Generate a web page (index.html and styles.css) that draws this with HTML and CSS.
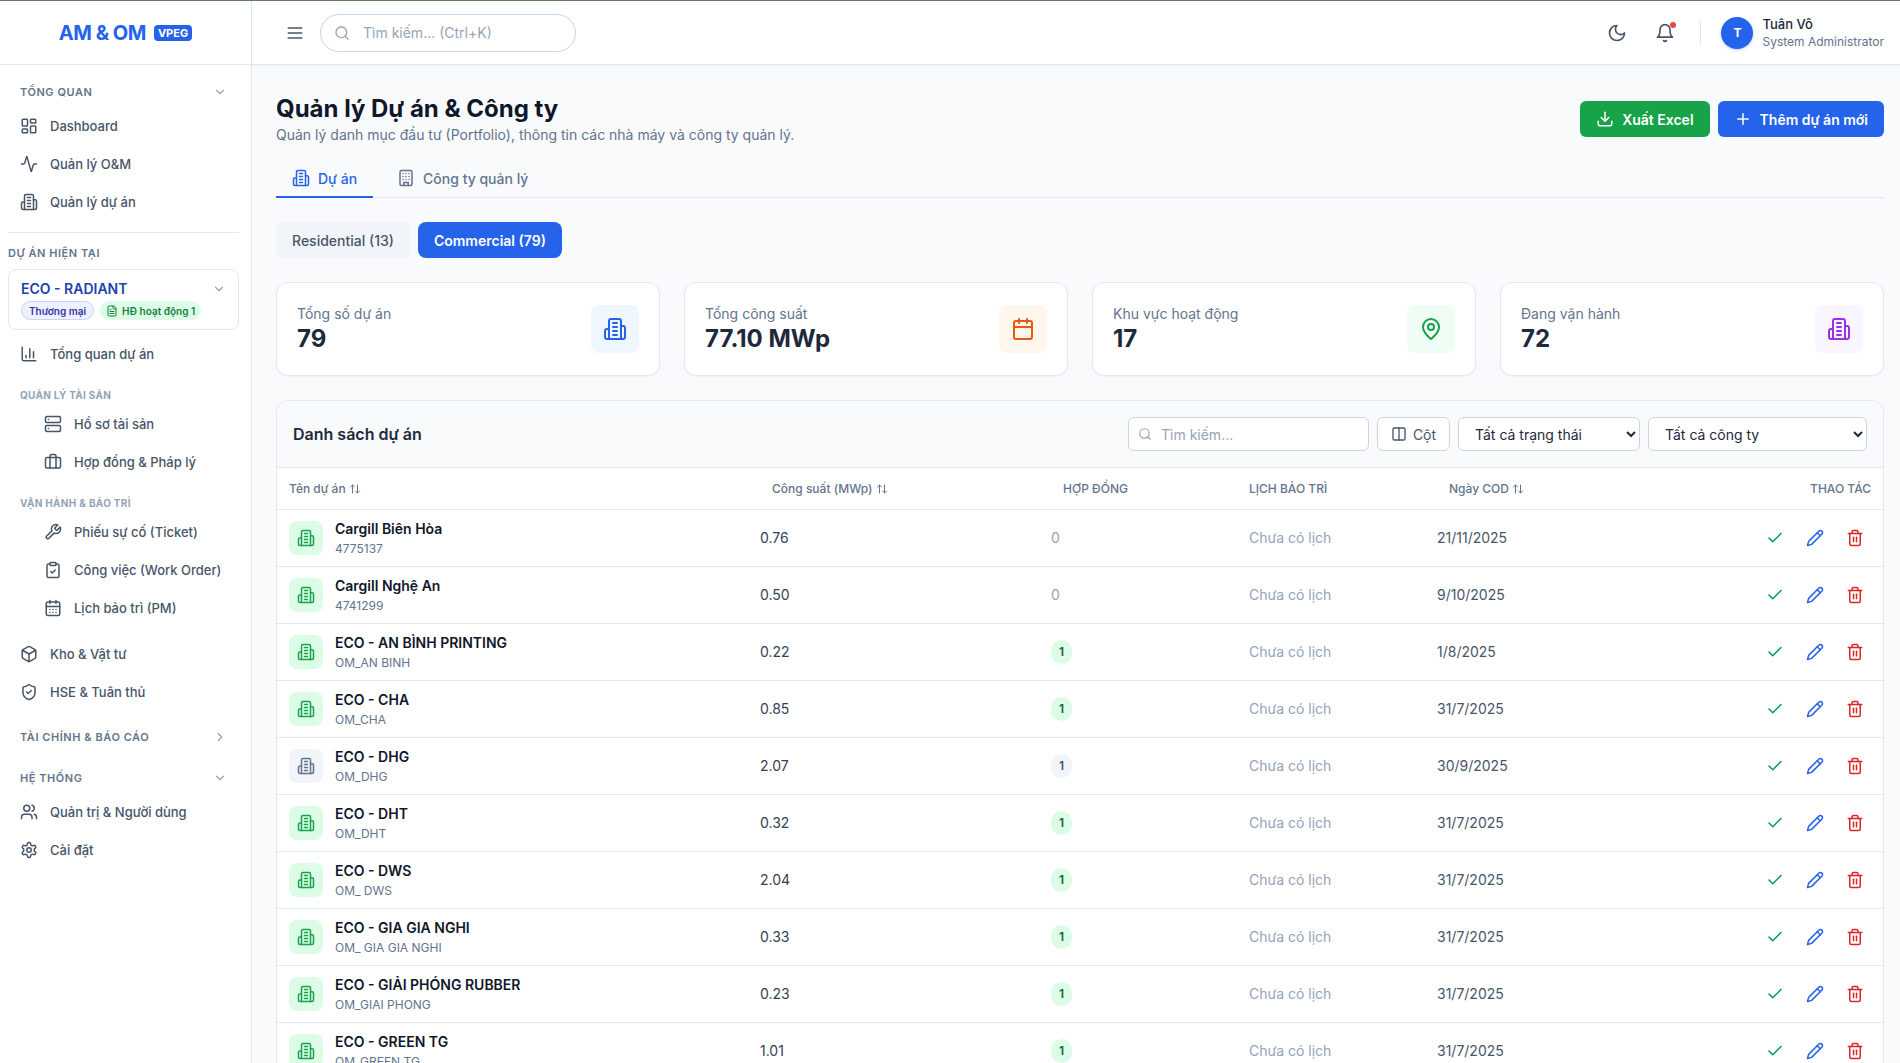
FILE: index.html
```html
<!DOCTYPE html>
<html lang="vi">
<head>
  <meta charset="UTF-8" />
  <meta name="viewport" content="width=device-width, initial-scale=1" />
  <title>Quản lý Dự án & Công ty</title>
  <link rel="stylesheet" href="styles.css">
</head>
<body>

  <!-- icon sprite -->
  <svg class="sprite" xmlns="http://www.w3.org/2000/svg">
    <symbol id="i-dashboard" viewBox="0 0 24 24"><rect x="3" y="3" width="7" height="9" rx="1"/><rect x="14" y="3" width="7" height="5" rx="1"/><rect x="14" y="12" width="7" height="9" rx="1"/><rect x="3" y="16" width="7" height="5" rx="1"/></symbol>
    <symbol id="i-activity" viewBox="0 0 24 24"><path d="M22 12h-2.48a2 2 0 0 0-1.93 1.46l-2.35 8.36a.25.25 0 0 1-.48 0L9.24 2.18a.25.25 0 0 0-.48 0l-2.35 8.36A2 2 0 0 1 4.49 12H2"/></symbol>
    <symbol id="i-building2" viewBox="0 0 24 24"><path d="M6 22V4a2 2 0 0 1 2-2h8a2 2 0 0 1 2 2v18Z"/><path d="M6 12H4a2 2 0 0 0-2 2v6a2 2 0 0 0 2 2h2"/><path d="M18 9h2a2 2 0 0 1 2 2v9a2 2 0 0 1-2 2h-2"/><path d="M10 6h4"/><path d="M10 10h4"/><path d="M10 14h4"/><path d="M10 18h4"/></symbol>
    <symbol id="i-building" viewBox="0 0 24 24"><rect x="4" y="2" width="16" height="20" rx="2"/><path d="M9 22v-4h6v4"/><path d="M8 6h.01"/><path d="M16 6h.01"/><path d="M12 6h.01"/><path d="M12 10h.01"/><path d="M12 14h.01"/><path d="M16 10h.01"/><path d="M16 14h.01"/><path d="M8 10h.01"/><path d="M8 14h.01"/></symbol>
    <symbol id="i-chart" viewBox="0 0 24 24"><path d="M3 3v16a2 2 0 0 0 2 2h16"/><path d="M18 17V9"/><path d="M13 17V5"/><path d="M8 17v-3"/></symbol>
    <symbol id="i-server" viewBox="0 0 24 24"><rect x="2" y="2" width="20" height="8" rx="2"/><rect x="2" y="14" width="20" height="8" rx="2"/><path d="M6 6h.01"/><path d="M6 18h.01"/></symbol>
    <symbol id="i-briefcase" viewBox="0 0 24 24"><path d="M16 20V4a2 2 0 0 0-2-2h-4a2 2 0 0 0-2 2v16"/><rect x="2" y="6" width="20" height="14" rx="2"/></symbol>
    <symbol id="i-wrench" viewBox="0 0 24 24"><path d="M14.7 6.3a1 1 0 0 0 0 1.4l1.6 1.6a1 1 0 0 0 1.4 0l3.77-3.77a6 6 0 0 1-7.94 7.94l-6.91 6.91a2.12 2.12 0 0 1-3-3l6.91-6.91a6 6 0 0 1 7.94-7.94l-3.76 3.76z"/></symbol>
    <symbol id="i-clipboard" viewBox="0 0 24 24"><rect x="8" y="2" width="8" height="4" rx="1"/><path d="M16 4h2a2 2 0 0 1 2 2v14a2 2 0 0 1-2 2H6a2 2 0 0 1-2-2V6a2 2 0 0 1 2-2h2"/><path d="m9 14 2 2 4-4"/></symbol>
    <symbol id="i-calendar-days" viewBox="0 0 24 24"><path d="M8 2v4"/><path d="M16 2v4"/><rect x="3" y="4" width="18" height="18" rx="2"/><path d="M3 10h18"/><path d="M8 14h.01"/><path d="M12 14h.01"/><path d="M16 14h.01"/><path d="M8 18h.01"/><path d="M12 18h.01"/><path d="M16 18h.01"/></symbol>
    <symbol id="i-calendar" viewBox="0 0 24 24"><path d="M8 2v4"/><path d="M16 2v4"/><rect x="3" y="4" width="18" height="18" rx="2"/><path d="M3 10h18"/></symbol>
    <symbol id="i-box" viewBox="0 0 24 24"><path d="M21 8a2 2 0 0 0-1-1.73l-7-4a2 2 0 0 0-2 0l-7 4A2 2 0 0 0 3 8v8a2 2 0 0 0 1 1.73l7 4a2 2 0 0 0 2 0l7-4A2 2 0 0 0 21 16Z"/><path d="m3.3 7 8.7 5 8.7-5"/><path d="M12 22V12"/></symbol>
    <symbol id="i-shield" viewBox="0 0 24 24"><path d="M20 13c0 5-3.5 7.5-7.66 8.95a1 1 0 0 1-.67-.01C7.5 20.5 4 18 4 13V6a1 1 0 0 1 1-1c2 0 4.5-1.2 6.24-2.72a1.17 1.17 0 0 1 1.52 0C14.51 3.81 17 5 19 5a1 1 0 0 1 1 1z"/><path d="m9 12 2 2 4-4"/></symbol>
    <symbol id="i-users" viewBox="0 0 24 24"><path d="M16 21v-2a4 4 0 0 0-4-4H6a4 4 0 0 0-4 4v2"/><circle cx="9" cy="7" r="4"/><path d="M22 21v-2a4 4 0 0 0-3-3.87"/><path d="M16 3.13a4 4 0 0 1 0 7.75"/></symbol>
    <symbol id="i-settings" viewBox="0 0 24 24"><path d="M12.22 2h-.44a2 2 0 0 0-2 2v.18a2 2 0 0 1-1 1.73l-.43.25a2 2 0 0 1-2 0l-.15-.08a2 2 0 0 0-2.73.73l-.22.38a2 2 0 0 0 .73 2.73l.15.1a2 2 0 0 1 1 1.72v.51a2 2 0 0 1-1 1.74l-.15.09a2 2 0 0 0-.73 2.73l.22.38a2 2 0 0 0 2.73.73l.15-.08a2 2 0 0 1 2 0l.43.25a2 2 0 0 1 1 1.73V20a2 2 0 0 0 2 2h.44a2 2 0 0 0 2-2v-.18a2 2 0 0 1 1-1.73l.43-.25a2 2 0 0 1 2 0l.15.08a2 2 0 0 0 2.73-.73l.22-.39a2 2 0 0 0-.73-2.73l-.15-.08a2 2 0 0 1-1-1.74v-.5a2 2 0 0 1 1-1.74l.15-.09a2 2 0 0 0 .73-2.73l-.22-.38a2 2 0 0 0-2.73-.73l-.15.08a2 2 0 0 1-2 0l-.43-.25a2 2 0 0 1-1-1.73V4a2 2 0 0 0-2-2z"/><circle cx="12" cy="12" r="3"/></symbol>
    <symbol id="i-down" viewBox="0 0 24 24"><path d="m6 9 6 6 6-6"/></symbol>
    <symbol id="i-right" viewBox="0 0 24 24"><path d="m9 18 6-6-6-6"/></symbol>
    <symbol id="i-file" viewBox="0 0 24 24"><path d="M15 2H6a2 2 0 0 0-2 2v16a2 2 0 0 0 2 2h12a2 2 0 0 0 2-2V7Z"/><path d="M14 2v4a2 2 0 0 0 2 2h4"/><path d="M10 9H8"/><path d="M16 13H8"/><path d="M16 17H8"/></symbol>
    <symbol id="i-menu" viewBox="0 0 24 24"><path d="M4 6h16"/><path d="M4 12h16"/><path d="M4 18h16"/></symbol>
    <symbol id="i-search" viewBox="0 0 24 24"><circle cx="11" cy="11" r="8"/><path d="m21 21-4.3-4.3"/></symbol>
    <symbol id="i-moon" viewBox="0 0 24 24"><path d="M12 3a6 6 0 0 0 9 9 9 9 0 1 1-9-9Z"/></symbol>
    <symbol id="i-bell" viewBox="0 0 24 24"><path d="M6 8a6 6 0 0 1 12 0c0 7 3 9 3 9H3s3-2 3-9"/><path d="M10.3 21a1.94 1.94 0 0 0 3.4 0"/></symbol>
    <symbol id="i-download" viewBox="0 0 24 24"><path d="M21 15v4a2 2 0 0 1-2 2H5a2 2 0 0 1-2-2v-4"/><path d="m7 10 5 5 5-5"/><path d="M12 15V3"/></symbol>
    <symbol id="i-plus" viewBox="0 0 24 24"><path d="M5 12h14"/><path d="M12 5v14"/></symbol>
    <symbol id="i-pin" viewBox="0 0 24 24"><path d="M20 10c0 6-8 12-8 12s-8-6-8-12a8 8 0 0 1 16 0Z"/><circle cx="12" cy="10" r="3"/></symbol>
    <symbol id="i-columns" viewBox="0 0 24 24"><rect x="3" y="3" width="18" height="18" rx="2"/><path d="M12 3v18"/></symbol>
    <symbol id="i-sort" viewBox="0 0 24 24"><path d="m21 16-4 4-4-4"/><path d="M17 20V4"/><path d="m3 8 4-4 4 4"/><path d="M7 4v16"/></symbol>
    <symbol id="i-check" viewBox="0 0 24 24"><path d="M20 6 9 17l-5-5"/></symbol>
    <symbol id="i-pencil" viewBox="0 0 24 24"><path d="M17 3a2.85 2.83 0 1 1 4 4L7.5 20.5 2 22l1.5-5.5Z"/><path d="m15 5 4 4"/></symbol>
    <symbol id="i-trash" viewBox="0 0 24 24"><path d="M3 6h18"/><path d="M19 6v14c0 1-1 2-2 2H7c-1 0-2-1-2-2V6"/><path d="M8 6V4c0-1 1-2 2-2h4c1 0 2 1 2 2v2"/><path d="M10 11v6"/><path d="M14 11v6"/></symbol>
  </svg>

  <div class="app">

    <!-- Sidebar -->
    <aside class="sidebar">
      <div class="logo">
        <span class="logo-text">AM &amp; OM</span>
        <span class="logo-tag">VPEG</span>
      </div>
      <nav class="nav">
        <div class="nav-head"><span>Tổng quan</span><svg class="ic ic-14"><use href="#i-down"/></svg></div>
        <a class="nav-item"><svg class="ic"><use href="#i-dashboard"/></svg>Dashboard</a>
        <a class="nav-item"><svg class="ic"><use href="#i-activity"/></svg>Quản lý O&amp;M</a>
        <a class="nav-item"><svg class="ic"><use href="#i-building2"/></svg>Quản lý dự án</a>

        <div class="nav-divider"></div>
        <div class="current-label">Dự án hiện tại</div>
        <div class="current-card">
          <div class="current-top">
            <span class="current-name">ECO - RADIANT</span>
            <svg class="ic ic-14"><use href="#i-down"/></svg>
          </div>
          <div class="current-tags">
            <span class="tag tag-type">Thương mại</span>
            <span class="tag tag-contract"><svg class="ic ic-12"><use href="#i-file"/></svg>HĐ hoạt động 1</span>
          </div>
        </div>

        <a class="nav-item nav-first"><svg class="ic"><use href="#i-chart"/></svg>Tổng quan dự án</a>

        <div class="nav-sub">Quản lý tài sản</div>
        <a class="nav-item nested"><svg class="ic"><use href="#i-server"/></svg>Hồ sơ tài sản</a>
        <a class="nav-item nested"><svg class="ic"><use href="#i-briefcase"/></svg>Hợp đồng &amp; Pháp lý</a>

        <div class="nav-sub">Vận hành &amp; Bảo trì</div>
        <a class="nav-item nested"><svg class="ic"><use href="#i-wrench"/></svg>Phiếu sự cố (Ticket)</a>
        <a class="nav-item nested"><svg class="ic"><use href="#i-clipboard"/></svg>Công việc (Work Order)</a>
        <a class="nav-item nested"><svg class="ic"><use href="#i-calendar-days"/></svg>Lịch bảo trì (PM)</a>

        <a class="nav-item nav-after"><svg class="ic"><use href="#i-box"/></svg>Kho &amp; Vật tư</a>
        <a class="nav-item"><svg class="ic"><use href="#i-shield"/></svg>HSE &amp; Tuân thủ</a>

        <div class="nav-head nav-head-gap"><span>Tài chính &amp; Báo cáo</span><svg class="ic ic-14"><use href="#i-right"/></svg></div>
        <div class="nav-head nav-head-gap"><span>Hệ thống</span><svg class="ic ic-14"><use href="#i-down"/></svg></div>
        <a class="nav-item"><svg class="ic"><use href="#i-users"/></svg>Quản trị &amp; Người dùng</a>
        <a class="nav-item"><svg class="ic"><use href="#i-settings"/></svg>Cài đặt</a>
      </nav>
    </aside>

    <div class="content">

      <!-- Topbar -->
      <header class="topbar">
        <svg class="ic ic-20 menu-btn"><use href="#i-menu"/></svg>
        <div class="top-search">
          <svg class="ic ic-16"><use href="#i-search"/></svg>
          <span>Tìm kiếm... (Ctrl+K)</span>
        </div>
        <div class="top-right">
          <svg class="ic ic-20"><use href="#i-moon"/></svg>
          <div class="bell">
            <svg class="ic ic-20"><use href="#i-bell"/></svg>
            <span class="bell-dot"></span>
          </div>
          <div class="top-sep"></div>
          <div class="avatar">T</div>
          <div class="user">
            <div class="user-name">Tuân Võ</div>
            <div class="user-role">System Administrator</div>
          </div>
        </div>
      </header>

      <main class="main">

        <div class="page-head">
          <div>
            <h1>Quản lý Dự án &amp; Công ty</h1>
            <p>Quản lý danh mục đầu tư (Portfolio), thông tin các nhà máy và công ty quản lý.</p>
          </div>
          <div class="page-actions">
            <button class="btn btn-green"><svg class="ic"><use href="#i-download"/></svg>Xuất Excel</button>
            <button class="btn btn-blue"><svg class="ic"><use href="#i-plus"/></svg>Thêm dự án mới</button>
          </div>
        </div>

        <div class="tabs">
          <div class="tab active"><svg class="ic"><use href="#i-building2"/></svg>Dự án</div>
          <div class="tab"><svg class="ic"><use href="#i-building"/></svg>Công ty quản lý</div>
        </div>

        <div class="pills">
          <button class="pill">Residential (13)</button>
          <button class="pill active">Commercial (79)</button>
        </div>

        <div class="stats">
          <div class="stat">
            <div><div class="stat-label">Tổng số dự án</div><div class="stat-value">79</div></div>
            <div class="stat-icon s-blue"><svg class="ic ic-24"><use href="#i-building2"/></svg></div>
          </div>
          <div class="stat">
            <div><div class="stat-label">Tổng công suất</div><div class="stat-value">77.10 MWp</div></div>
            <div class="stat-icon s-orange"><svg class="ic ic-24"><use href="#i-calendar"/></svg></div>
          </div>
          <div class="stat">
            <div><div class="stat-label">Khu vực hoạt động</div><div class="stat-value">17</div></div>
            <div class="stat-icon s-green"><svg class="ic ic-24"><use href="#i-pin"/></svg></div>
          </div>
          <div class="stat">
            <div><div class="stat-label">Đang vận hành</div><div class="stat-value">72</div></div>
            <div class="stat-icon s-purple"><svg class="ic ic-24"><use href="#i-building2"/></svg></div>
          </div>
        </div>

        <section class="panel">
          <div class="panel-head">
            <h2>Danh sách dự án</h2>
            <div class="panel-tools">
              <div class="tool-search">
                <svg class="ic ic-14"><use href="#i-search"/></svg>
                <span>Tìm kiếm...</span>
              </div>
              <button class="tool-btn"><svg class="ic ic-16"><use href="#i-columns"/></svg>Cột</button>
              <select class="tool-select sel-status"><option>Tất cả trạng thái</option></select>
              <select class="tool-select sel-company"><option>Tất cả công ty</option></select>
            </div>
          </div>

          <table class="projects">
            <colgroup>
              <col class="c-name"><col class="c-power"><col class="c-contract"><col class="c-plan"><col class="c-cod"><col class="c-act">
            </colgroup>
            <thead>
              <tr>
                <th>Tên dự án <svg class="ic ic-12"><use href="#i-sort"/></svg></th>
                <th class="th-in">Công suất (MWp) <svg class="ic ic-12"><use href="#i-sort"/></svg></th>
                <th class="th-in">HỢP ĐỒNG</th>
                <th>LỊCH BẢO TRÌ</th>
                <th class="th-in">Ngày COD <svg class="ic ic-12"><use href="#i-sort"/></svg></th>
                <th class="th-right">THAO TÁC</th>
              </tr>
            </thead>
            <tbody>
              <tr>
                <td><div class="proj"><div class="proj-icon"><svg class="ic"><use href="#i-building2"/></svg></div><div><div class="proj-name">Cargill Biên Hòa</div><div class="proj-code">4775137</div></div></div></td>
                <td class="num">0.76</td>
                <td class="zero">0</td>
                <td class="plan">Chưa có lịch</td>
                <td class="date">21/11/2025</td>
                <td><div class="acts"><button class="act a-check"><svg class="ic"><use href="#i-check"/></svg></button><button class="act a-edit"><svg class="ic"><use href="#i-pencil"/></svg></button><button class="act a-del"><svg class="ic"><use href="#i-trash"/></svg></button></div></td>
              </tr>
              <tr>
                <td><div class="proj"><div class="proj-icon"><svg class="ic"><use href="#i-building2"/></svg></div><div><div class="proj-name">Cargill Nghệ An</div><div class="proj-code">4741299</div></div></div></td>
                <td class="num">0.50</td>
                <td class="zero">0</td>
                <td class="plan">Chưa có lịch</td>
                <td class="date">9/10/2025</td>
                <td><div class="acts"><button class="act a-check"><svg class="ic"><use href="#i-check"/></svg></button><button class="act a-edit"><svg class="ic"><use href="#i-pencil"/></svg></button><button class="act a-del"><svg class="ic"><use href="#i-trash"/></svg></button></div></td>
              </tr>
              <tr>
                <td><div class="proj"><div class="proj-icon"><svg class="ic"><use href="#i-building2"/></svg></div><div><div class="proj-name">ECO - AN BÌNH PRINTING</div><div class="proj-code">OM_AN BINH</div></div></div></td>
                <td class="num">0.22</td>
                <td><span class="count">1</span></td>
                <td class="plan">Chưa có lịch</td>
                <td class="date">1/8/2025</td>
                <td><div class="acts"><button class="act a-check"><svg class="ic"><use href="#i-check"/></svg></button><button class="act a-edit"><svg class="ic"><use href="#i-pencil"/></svg></button><button class="act a-del"><svg class="ic"><use href="#i-trash"/></svg></button></div></td>
              </tr>
              <tr>
                <td><div class="proj"><div class="proj-icon"><svg class="ic"><use href="#i-building2"/></svg></div><div><div class="proj-name">ECO - CHA</div><div class="proj-code">OM_CHA</div></div></div></td>
                <td class="num">0.85</td>
                <td><span class="count">1</span></td>
                <td class="plan">Chưa có lịch</td>
                <td class="date">31/7/2025</td>
                <td><div class="acts"><button class="act a-check"><svg class="ic"><use href="#i-check"/></svg></button><button class="act a-edit"><svg class="ic"><use href="#i-pencil"/></svg></button><button class="act a-del"><svg class="ic"><use href="#i-trash"/></svg></button></div></td>
              </tr>
              <tr>
                <td><div class="proj"><div class="proj-icon off"><svg class="ic"><use href="#i-building2"/></svg></div><div><div class="proj-name">ECO - DHG</div><div class="proj-code">OM_DHG</div></div></div></td>
                <td class="num">2.07</td>
                <td><span class="count off">1</span></td>
                <td class="plan">Chưa có lịch</td>
                <td class="date">30/9/2025</td>
                <td><div class="acts"><button class="act a-check"><svg class="ic"><use href="#i-check"/></svg></button><button class="act a-edit"><svg class="ic"><use href="#i-pencil"/></svg></button><button class="act a-del"><svg class="ic"><use href="#i-trash"/></svg></button></div></td>
              </tr>
              <tr>
                <td><div class="proj"><div class="proj-icon"><svg class="ic"><use href="#i-building2"/></svg></div><div><div class="proj-name">ECO - DHT</div><div class="proj-code">OM_DHT</div></div></div></td>
                <td class="num">0.32</td>
                <td><span class="count">1</span></td>
                <td class="plan">Chưa có lịch</td>
                <td class="date">31/7/2025</td>
                <td><div class="acts"><button class="act a-check"><svg class="ic"><use href="#i-check"/></svg></button><button class="act a-edit"><svg class="ic"><use href="#i-pencil"/></svg></button><button class="act a-del"><svg class="ic"><use href="#i-trash"/></svg></button></div></td>
              </tr>
              <tr>
                <td><div class="proj"><div class="proj-icon"><svg class="ic"><use href="#i-building2"/></svg></div><div><div class="proj-name">ECO - DWS</div><div class="proj-code">OM_ DWS</div></div></div></td>
                <td class="num">2.04</td>
                <td><span class="count">1</span></td>
                <td class="plan">Chưa có lịch</td>
                <td class="date">31/7/2025</td>
                <td><div class="acts"><button class="act a-check"><svg class="ic"><use href="#i-check"/></svg></button><button class="act a-edit"><svg class="ic"><use href="#i-pencil"/></svg></button><button class="act a-del"><svg class="ic"><use href="#i-trash"/></svg></button></div></td>
              </tr>
              <tr>
                <td><div class="proj"><div class="proj-icon"><svg class="ic"><use href="#i-building2"/></svg></div><div><div class="proj-name">ECO - GIA GIA NGHI</div><div class="proj-code">OM_ GIA GIA NGHI</div></div></div></td>
                <td class="num">0.33</td>
                <td><span class="count">1</span></td>
                <td class="plan">Chưa có lịch</td>
                <td class="date">31/7/2025</td>
                <td><div class="acts"><button class="act a-check"><svg class="ic"><use href="#i-check"/></svg></button><button class="act a-edit"><svg class="ic"><use href="#i-pencil"/></svg></button><button class="act a-del"><svg class="ic"><use href="#i-trash"/></svg></button></div></td>
              </tr>
              <tr>
                <td><div class="proj"><div class="proj-icon"><svg class="ic"><use href="#i-building2"/></svg></div><div><div class="proj-name">ECO - GIẢI PHÓNG RUBBER</div><div class="proj-code">OM_GIAI PHONG</div></div></div></td>
                <td class="num">0.23</td>
                <td><span class="count">1</span></td>
                <td class="plan">Chưa có lịch</td>
                <td class="date">31/7/2025</td>
                <td><div class="acts"><button class="act a-check"><svg class="ic"><use href="#i-check"/></svg></button><button class="act a-edit"><svg class="ic"><use href="#i-pencil"/></svg></button><button class="act a-del"><svg class="ic"><use href="#i-trash"/></svg></button></div></td>
              </tr>
              <tr>
                <td><div class="proj"><div class="proj-icon"><svg class="ic"><use href="#i-building2"/></svg></div><div><div class="proj-name">ECO - GREEN TG</div><div class="proj-code">OM_GREEN TG</div></div></div></td>
                <td class="num">1.01</td>
                <td><span class="count">1</span></td>
                <td class="plan">Chưa có lịch</td>
                <td class="date">31/7/2025</td>
                <td><div class="acts"><button class="act a-check"><svg class="ic"><use href="#i-check"/></svg></button><button class="act a-edit"><svg class="ic"><use href="#i-pencil"/></svg></button><button class="act a-del"><svg class="ic"><use href="#i-trash"/></svg></button></div></td>
              </tr>
            </tbody>
          </table>
        </section>

      </main>
    </div>
  </div>

</body>
</html>
```

FILE: styles.css
```css
/* Reset & Basic */
* {
  box-sizing: border-box;
}
html, body {
  height: 100%;
}
body {
  margin: 0;
  font-family: Inter, "Noto Sans", sans-serif;
  font-size: 14px;
  color: #1e293b;
  background: #f8fafc;
  overflow: hidden;
}
h1, h2, p {
  margin: 0;
}
button, select {
  font-family: inherit;
}

.sprite {
  display: none;
}
.ic {
  width: 18px;
  height: 18px;
  flex-shrink: 0;
  fill: none;
  stroke: currentColor;
  stroke-width: 2;
  stroke-linecap: round;
  stroke-linejoin: round;
}
.ic-12 { width: 12px; height: 12px; }
.ic-14 { width: 14px; height: 14px; }
.ic-16 { width: 16px; height: 16px; }
.ic-20 { width: 20px; height: 20px; }
.ic-24 { width: 24px; height: 24px; }

.app {
  display: flex;
  height: 100vh;
  border-top: 1px solid #5d7d5f;
}

/* Sidebar */
.sidebar {
  width: 252px;
  flex-shrink: 0;
  background: #fff;
  border-right: 1px solid #e2e8f0;
}
.logo {
  height: 64px;
  display: flex;
  align-items: center;
  justify-content: center;
  gap: 8px;
  border-bottom: 1px solid #e2e8f0;
}
.logo-text {
  font-size: 20px;
  font-weight: 700;
  letter-spacing: -0.5px;
  color: #2563eb;
}
.logo-tag {
  padding: 1px 4px;
  border-radius: 4px;
  background: #2563eb;
  color: #fff;
  font-size: 11px;
  font-weight: 700;
  line-height: 14px;
}
.nav {
  padding-top: 11px;
}
.nav-head {
  height: 31px;
  padding: 0 24px 0 20px;
  display: flex;
  align-items: center;
  justify-content: space-between;
  font-size: 11px;
  font-weight: 600;
  letter-spacing: 0.55px;
  text-transform: uppercase;
  color: #64748b;
}
.nav-head .ic {
  color: #94a3b8;
}
.nav-head-gap {
  margin-top: 10px;
}
.nav-item {
  height: 38px;
  padding-left: 20px;
  display: flex;
  align-items: center;
  gap: 12px;
  font-size: 13px;
  font-weight: 500;
  color: #475569;
}
.nav-item.nested {
  padding-left: 44px;
}
.nav-first {
  margin-top: 5px;
}
.nav-after {
  margin-top: 8px;
}
.nav-divider {
  height: 1px;
  margin: 11px 12px 0 8px;
  background: #e2e8f0;
}
.current-label {
  margin: 13px 0 0 8px;
  font-size: 11px;
  font-weight: 600;
  line-height: 14px;
  letter-spacing: 0.55px;
  text-transform: uppercase;
  color: #64748b;
}
.current-card {
  height: 61px;
  margin: 9px 12px 0 8px;
  padding: 9px 12px;
  border: 1px solid #e2e8f0;
  border-radius: 8px;
}
.current-top {
  display: flex;
  align-items: center;
  justify-content: space-between;
  color: #94a3b8;
}
.current-name {
  font-size: 14px;
  font-weight: 600;
  line-height: 20px;
  color: #1e40af;
}
.current-tags {
  margin-top: 2px;
  display: flex;
  align-items: center;
  gap: 6px;
}
.tag {
  display: flex;
  align-items: center;
  gap: 4px;
  height: 19px;
  border-radius: 10px;
  font-size: 10px;
  font-weight: 600;
  white-space: nowrap;
}
.tag-type {
  padding: 0 7px;
  background: #eef2ff;
  border: 1px solid #c7d2fe;
  color: #3730a3;
}
.tag-contract {
  padding: 0 6px;
  background: #dcfce7;
  color: #15803d;
}
.nav-sub {
  height: 21px;
  margin-top: 11px;
  padding-left: 20px;
  display: flex;
  align-items: center;
  font-size: 10px;
  font-weight: 700;
  letter-spacing: 0.3px;
  text-transform: uppercase;
  color: #94a3b8;
}

/* Right part */
.content {
  flex: 1;
  min-width: 0;
  display: flex;
  flex-direction: column;
}
.topbar {
  height: 64px;
  flex-shrink: 0;
  padding: 0 16px 0 33px;
  display: flex;
  align-items: center;
  background: #fff;
  border-bottom: 1px solid #e2e8f0;
  box-shadow: 0 1px 2px rgba(0,0,0,0.04);
  color: #475569;
}
.menu-btn {
  margin-right: 15px;
}
.top-search {
  width: 256px;
  height: 38px;
  padding: 0 13px;
  display: flex;
  align-items: center;
  gap: 13px;
  border: 1px solid #cbd5e1;
  border-radius: 19px;
  color: #94a3b8;
}
.top-right {
  margin-left: auto;
  display: flex;
  align-items: center;
}
.bell {
  position: relative;
  display: flex;
  margin-left: 28px;
}
.bell-dot {
  position: absolute;
  top: -1px;
  right: -1px;
  width: 6px;
  height: 6px;
  border-radius: 50%;
  background: #ef4444;
}
.top-sep {
  width: 1px;
  height: 24px;
  margin: 0 20px 0 25px;
  background: #e2e8f0;
}
.avatar {
  width: 32px;
  height: 32px;
  margin-right: 9px;
  border-radius: 50%;
  display: flex;
  align-items: center;
  justify-content: center;
  background: #2563eb;
  box-shadow: 0 1px 3px rgba(37,99,235,0.3);
  color: #fff;
  font-size: 12px;
  font-weight: 700;
}
.user-name {
  font-size: 13px;
  font-weight: 500;
  line-height: 18px;
  color: #1e293b;
}
.user-role {
  font-size: 12px;
  line-height: 17px;
  color: #64748b;
}

/* Main */
.main {
  flex: 1;
  min-height: 0;
  padding: 24px 16px 0 24px;
  overflow: hidden;
}
.page-head {
  height: 60px;
  display: flex;
  align-items: center;
  justify-content: space-between;
}
h1 {
  font-size: 24px;
  font-weight: 700;
  line-height: 32px;
  color: #0f172a;
}
.page-head p {
  font-size: 14px;
  line-height: 20px;
  color: #64748b;
}
.page-actions {
  display: flex;
  gap: 8px;
}
.btn {
  height: 36px;
  padding: 0 16px;
  display: flex;
  align-items: center;
  gap: 8px;
  border: none;
  border-radius: 6px;
  color: #fff;
  font-size: 14px;
  font-weight: 600;
}
.btn-green { background: #16a34a; }
.btn-blue { background: #2563eb; }

.tabs {
  margin-top: 11px;
  display: flex;
  gap: 8px;
  border-bottom: 1px solid #e2e8f0;
}
.tab {
  height: 38px;
  margin-bottom: -1px;
  padding: 0 16px;
  display: flex;
  align-items: center;
  gap: 8px;
  border-bottom: 2px solid transparent;
  font-size: 14px;
  font-weight: 500;
  color: #64748b;
}
.tab.active {
  color: #2563eb;
  border-bottom-color: #2563eb;
}

.pills {
  margin-top: 24px;
  display: flex;
  gap: 8px;
}
.pill {
  height: 36px;
  padding: 0 16px;
  border: none;
  border-radius: 8px;
  background: #f1f5f9;
  color: #475569;
  font-size: 14px;
  font-weight: 500;
}
.pill.active {
  background: #2563eb;
  color: #fff;
  font-weight: 600;
}

/* Stat cards */
.stats {
  margin-top: 24px;
  display: grid;
  grid-template-columns: repeat(4, 1fr);
  gap: 24px;
}
.stat {
  height: 94px;
  padding: 0 20px;
  display: flex;
  align-items: center;
  justify-content: space-between;
  background: #fff;
  border: 1px solid #e2e8f0;
  border-radius: 12px;
  box-shadow: 0 1px 2px rgba(0,0,0,0.04);
}
.stat-label {
  font-size: 14px;
  line-height: 20px;
  color: #64748b;
}
.stat-value {
  font-size: 24px;
  font-weight: 700;
  line-height: 30px;
  color: #1e293b;
}
.stat-icon {
  width: 48px;
  height: 48px;
  border-radius: 8px;
  display: flex;
  align-items: center;
  justify-content: center;
}
.s-blue { background: #eff6ff; color: #2563eb; }
.s-orange { background: #fff7ed; color: #ea580c; }
.s-green { background: #f0fdf4; color: #16a34a; }
.s-purple { background: #faf5ff; color: #9333ea; }

/* Table */
.panel {
  margin-top: 24px;
  background: #fff;
  border: 1px solid #e2e8f0;
  border-radius: 12px;
  overflow: hidden;
}
.panel-head {
  height: 67px;
  padding: 0 16px;
  display: flex;
  align-items: center;
  justify-content: space-between;
  background: #f8fafc;
  border-bottom: 1px solid #e2e8f0;
}
h2 {
  font-size: 16px;
  font-weight: 600;
  color: #1e293b;
}
.panel-tools {
  display: flex;
  gap: 8px;
}
.tool-search {
  width: 241px;
  height: 34px;
  padding: 0 9px;
  display: flex;
  align-items: center;
  gap: 9px;
  background: #fff;
  border: 1px solid #cbd5e1;
  border-radius: 6px;
  color: #94a3b8;
}
.tool-btn {
  width: 73px;
  height: 34px;
  display: flex;
  align-items: center;
  justify-content: center;
  gap: 6px;
  background: #fff;
  border: 1px solid #cbd5e1;
  border-radius: 6px;
  color: #475569;
  font-size: 14px;
}
.tool-select {
  height: 34px;
  padding: 0 4px 0 12px;
  background: #fff;
  border: 1px solid #cbd5e1;
  border-radius: 6px;
  color: #1e293b;
  font-size: 14px;
}
.sel-status { width: 182px; }
.sel-company { width: 219px; }

.projects {
  width: 100%;
  table-layout: fixed;
  border-collapse: collapse;
}
.c-name { width: 471px; }
.c-power { width: 291px; }
.c-contract { width: 198px; }
.c-plan { width: 188px; }
.c-cod { width: 200px; }

.projects th {
  height: 41px;
  padding: 0 12px;
  text-align: left;
  font-size: 12px;
  font-weight: 500;
  color: #64748b;
  border-bottom: 1px solid #e2e8f0;
}
.projects th .ic {
  vertical-align: -2px;
}
.projects th.th-in {
  padding-left: 24px;
}
.projects th.th-right {
  text-align: right;
}
.projects td {
  height: 57px;
  padding: 0 12px;
  border-bottom: 1px solid #e2e8f0;
}
.proj {
  display: flex;
  align-items: center;
  gap: 12px;
}
.proj-icon {
  width: 34px;
  height: 34px;
  border-radius: 8px;
  display: flex;
  align-items: center;
  justify-content: center;
  background: #dcfce7;
  color: #16a34a;
}
.proj-icon.off {
  background: #f1f5f9;
  color: #64748b;
}
.proj-name {
  font-size: 14px;
  font-weight: 600;
  line-height: 20px;
  color: #0f172a;
}
.proj-code {
  font-size: 12px;
  line-height: 16px;
  margin-top: 2px;
  color: #64748b;
}
.num {
  color: #334155;
}
.zero {
  color: #94a3b8;
}
.plan {
  color: #94a3b8;
}
.date {
  color: #475569;
}
.count {
  display: inline-flex;
  align-items: center;
  justify-content: center;
  width: 21px;
  height: 24px;
  border-radius: 12px;
  background: #dcfce7;
  color: #166534;
  font-size: 12px;
  font-weight: 600;
}
.count.off {
  background: #f1f5f9;
  color: #475569;
}
.acts {
  display: flex;
  justify-content: flex-end;
  gap: 8px;
}
.act {
  width: 32px;
  height: 32px;
  padding: 0;
  display: flex;
  align-items: center;
  justify-content: center;
  background: none;
  border: none;
}
.a-check { color: #059669; }
.a-edit { color: #2563eb; }
.a-del { color: #dc2626; }
```
